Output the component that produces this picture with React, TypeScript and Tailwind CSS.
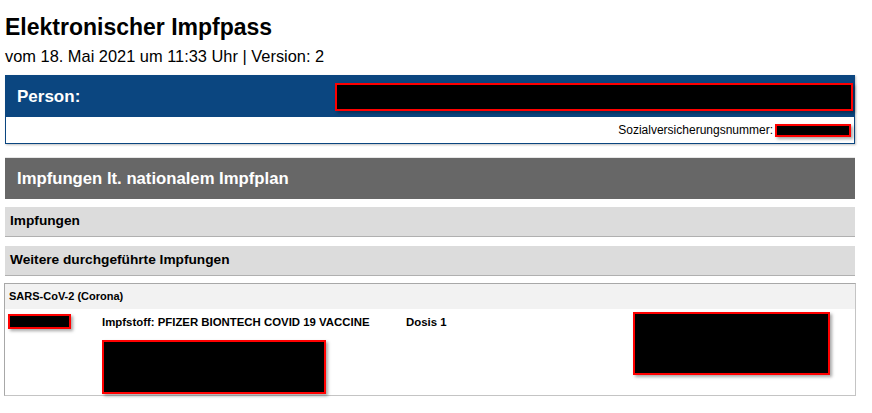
import { FC } from "react";

const Redacted: FC<{ className?: string }> = ({ className = "" }) => (
  <div
    className={`border-2 border-[#ff0000] bg-black shadow-[2px_2px_3px_rgba(0,0,0,0.35)] ${className}`}
  />
);

const App: FC = () => {
  return (
    <div className="min-h-[413px] bg-white pl-[5px] pt-[13px] font-['Liberation_Sans',Arial,sans-serif] text-black">
      <h1 className="text-[23px] font-bold leading-[28px]">Elektronischer Impfpass</h1>
      <p className="mt-[6px] text-[16.4px] leading-[18px]">vom 18. Mai 2021 um 11:33 Uhr | Version: 2</p>

      {/* Person */}
      <div className="mt-[10px] w-[850px] border border-[#0b4680] shadow-[1px_1px_2px_rgba(0,0,0,0.25)]">
        <div className="flex h-[41px] items-center bg-[#0b4680] pl-[11px] pr-[1px]">
          <span className="w-[318px] pt-[1px] text-[17px] font-bold text-white">Person:</span>
          <Redacted className="h-[28px] flex-1" />
        </div>
        <div className="flex h-[26px] items-center justify-end pr-[3px] text-[12px]">
          <span>Sozialversicherungsnummer:</span>
          <Redacted className="ml-[2px] h-[13px] w-[76px]" />
        </div>
      </div>

      {/* Nationaler Impfplan */}
      <div className="mt-[14px] flex h-[41px] w-[850px] items-center bg-[#676767] pl-[12px] shadow-[0_-1px_0_#e6e6e6]">
        <span className="text-[16.7px] font-bold text-white">Impfungen lt. nationalem Impfplan</span>
      </div>

      <div className="mt-[8px] flex h-[30px] w-[850px] items-center border-b border-[#b0b0b0] bg-[#dcdcdc] pl-[5px]">
        <span className="text-[13.7px] font-bold">Impfungen</span>
      </div>

      <div className="mt-[9px] flex h-[30px] w-[850px] items-center border-b border-[#b0b0b0] bg-[#dcdcdc] pl-[5px]">
        <span className="text-[13.7px] font-bold">Weitere durchgeführte Impfungen</span>
      </div>

      {/* SARS-CoV-2 card */}
      <div className="-ml-[1px] mt-[7px] h-[113px] w-[852px] border border-[#a8a8a8] border-b-[#c4c4c4] border-r-[#c4c4c4]">
        <div className="flex h-[25px] items-center bg-[#f2f2f2] pl-[4px]">
          <span className="text-[11px] font-bold">SARS-CoV-2 (Corona)</span>
        </div>
        <div className="flex pl-[3px] pt-[3px]">
          <Redacted className="mt-[2px] h-[15px] w-[63px]" />
          <div className="ml-[31px] flex w-[304px] flex-col">
            <span className="mt-[4px] text-[11.4px] font-bold leading-[13px]">
              Impfstoff: PFIZER BIONTECH COVID 19 VACCINE
            </span>
            <Redacted className="mt-[11px] h-[54px] w-[224px]" />
          </div>
          <span className="mt-[4px] text-[11.4px] font-bold leading-[13px]">Dosis 1</span>
          <Redacted className="ml-auto mr-[25px] h-[63px] w-[197px]" />
        </div>
      </div>
    </div>
  );
};

export default App;
